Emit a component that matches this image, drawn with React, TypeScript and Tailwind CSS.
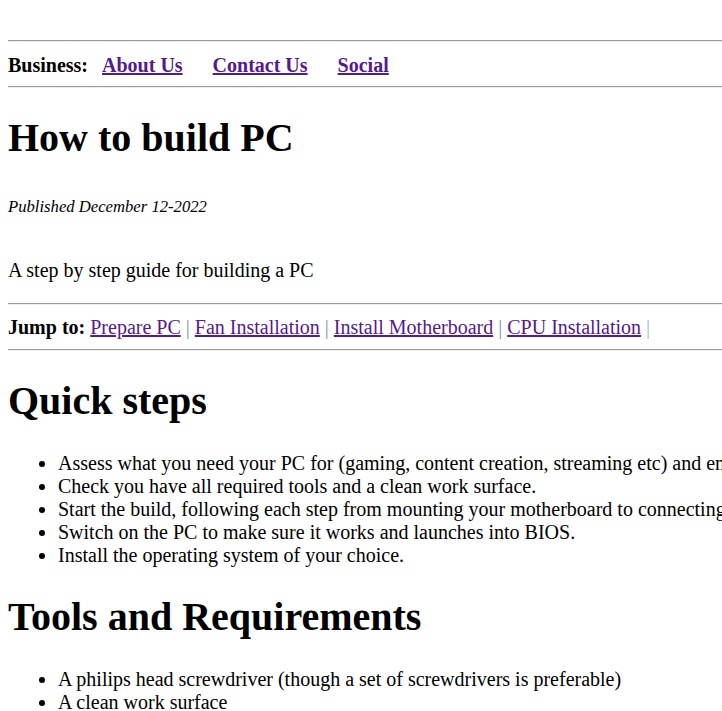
import React from "react";

function Rule({ className = "" }: { className?: string }) {
  return (
    <div
      className={`h-[2px] border-t border-b border-t-[#9a9a9a] border-b-[#eeeeee] ${className}`}
    />
  );
}

export default function App() {
  const link = "text-[#551a8b] underline";
  return (
    <div className="w-[722px] h-[711px] overflow-hidden bg-white text-black font-['Liberation_Serif','Times_New_Roman',serif]">
      <div className="w-[1400px] pl-2 pt-[40px] text-[20px] leading-[23px] whitespace-nowrap">
        <Rule />
        <nav className="mt-[12px] flex font-bold">
          <span>Business:</span>
          <div className="ml-[14px] flex gap-[30px]">
            <a className={link}>About Us</a>
            <a className={link}>Contact Us</a>
            <a className={link}>Social</a>
          </div>
        </nav>
        <Rule className="mt-[9px]" />
        <h1 className="mt-[27px] text-[40px] leading-[46px] font-bold">How to build PC</h1>
        <p className="mt-[36px] text-[16.67px] leading-[19px] italic">Published December 12-2022</p>
        <p className="mt-[43px]">A step by step guide for building a PC</p>
        <Rule className="mt-[21px]" />
        <div className="mt-[11px]">
          <b>Jump to:</b> <a className={link}>Prepare PC</a>{" "}
          <span className="text-[#7f93a8]">|</span> <a className={link}>Fan Installation</a>{" "}
          <span className="text-[#7f93a8]">|</span> <a className={link}>Install Motherboard</a>{" "}
          <span className="text-[#7f93a8]">|</span> <a className={link}>CPU Installation</a>{" "}
          <span className="text-[#93bde6]">|</span>
        </div>
        <Rule className="mt-[10px]" />
        <h2 className="mt-[27px] text-[40px] leading-[46px] font-bold">Quick steps</h2>
        <ul className="mt-[28px] list-disc pl-[50px]">
          <li>Assess what you need your PC for (gaming, content creation, streaming etc) and ensure you pick parts to match your budget.</li>
          <li>Check you have all required tools and a clean work surface.</li>
          <li>Start the build, following each step from mounting your motherboard to connecting the power supply.</li>
          <li>Switch on the PC to make sure it works and launches into BIOS.</li>
          <li>Install the operating system of your choice.</li>
        </ul>
        <h2 className="mt-[27px] text-[40px] leading-[46px] font-bold">Tools and Requirements</h2>
        <ul className="mt-[28px] list-disc pl-[50px]">
          <li>A philips head screwdriver (though a set of screwdrivers is preferable)</li>
          <li>A clean work surface</li>
          <li>An anti-static wrist strap</li>
        </ul>
      </div>
    </div>
  );
}
